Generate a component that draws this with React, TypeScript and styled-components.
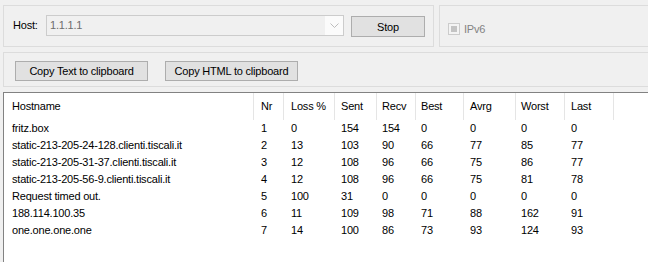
import React from 'react'
import styled, { createGlobalStyle } from 'styled-components'

const GlobalStyle = createGlobalStyle`
  html, body {
    margin: 0;
    width: 648px;
    height: 262px;
    overflow: hidden;
    background: #f0f0f0;
    font-family: "Liberation Sans", Arial, sans-serif;
    font-size: 11px;
    letter-spacing: -0.2px;
    color: #000;
  }
`

const columns = [
  { key: 'host', label: 'Hostname', width: 250, pad: 8 },
  { key: 'nr', label: 'Nr', width: 30, pad: 7 },
  { key: 'loss', label: 'Loss %', width: 51, pad: 7 },
  { key: 'sent', label: 'Sent', width: 42, pad: 6 },
  { key: 'recv', label: 'Recv', width: 39, pad: 5 },
  { key: 'best', label: 'Best', width: 48, pad: 5 },
  { key: 'avrg', label: 'Avrg', width: 52, pad: 6 },
  { key: 'worst', label: 'Worst', width: 49, pad: 5 },
  { key: 'last', label: 'Last', width: 49, pad: 6 },
]

const rows = [
  ['fritz.box', '1', '0', '154', '154', '0', '0', '0', '0'],
  ['static-213-205-24-128.clienti.tiscali.it', '2', '13', '103', '90', '66', '77', '85', '77'],
  ['static-213-205-31-37.clienti.tiscali.it', '3', '12', '108', '96', '66', '75', '86', '77'],
  ['static-213-205-56-9.clienti.tiscali.it', '4', '12', '108', '96', '66', '75', '81', '78'],
  ['Request timed out.', '5', '100', '31', '0', '0', '0', '0', '0'],
  ['188.114.100.35', '6', '11', '109', '98', '71', '88', '162', '91'],
  ['one.one.one.one', '7', '14', '100', '86', '73', '93', '124', '93'],
]

const gridTemplate = columns.map((c) => `${c.width}px`).join(' ') + ' 1fr'

const Window = styled.div`
  box-sizing: border-box;
  display: flex;
  flex-direction: column;
  gap: 5px;
  height: 262px;
  padding: 5px 0 0 3px;
`

const TopRow = styled.div`
  display: flex;
  flex: none;
  gap: 5px;
`

const GroupBox = styled.div<{ $width?: number; $height: number; $open?: boolean }>`
  box-sizing: border-box;
  display: flex;
  flex: ${(p) => (p.$width ? 'none' : '1 0 auto')};
  align-items: flex-start;
  height: ${(p) => p.$height}px;
  ${(p) => (p.$width ? `width: ${p.$width}px;` : '')}
  border: 1px solid #dcdcdc;
  ${(p) => (p.$open ? 'border-right: none;' : '')}
`

const HostBox = styled(GroupBox)`
  padding: 9px 0 0 9px;
`

const OptionBox = styled(GroupBox)`
  padding: 17px 0 0 8px;
`

const CopyBox = styled(GroupBox)`
  flex: none;
  padding: 8px 0 0 11px;
  gap: 17px;
`

const Label = styled.span`
  width: 33px;
  line-height: 21px;
`

const Combo = styled.div`
  box-sizing: border-box;
  display: flex;
  width: 298px;
  height: 21px;
  border: 1px solid #cccccc;
  background: #f0f0f0;
`

const ComboText = styled.span`
  flex: 1;
  padding-left: 3px;
  line-height: 19px;
  color: #6d6d6d;
`

const ComboArrow = styled.span`
  display: flex;
  align-items: center;
  justify-content: center;
  width: 18px;
  background: #fbfbfb;
`

const Button = styled.button<{ $width: number; $height: number }>`
  box-sizing: border-box;
  width: ${(p) => p.$width}px;
  height: ${(p) => p.$height}px;
  margin: 0;
  padding: 0;
  border: 1px solid #adadad;
  background: #e1e1e1;
  font: inherit;
  letter-spacing: inherit;
  color: #000;
`

const StopButton = styled(Button)`
  margin: 1px 0 0 7px;
`

const CheckLabel = styled.label`
  display: flex;
  align-items: center;
  gap: 4px;
  color: #838383;
`

const CheckBox = styled.span`
  box-sizing: border-box;
  display: flex;
  align-items: center;
  justify-content: center;
  width: 12px;
  height: 12px;
  border: 1px solid #cccccc;
  background: #f4f4f4;

  &::after {
    content: '';
    width: 6px;
    height: 6px;
    background: #c4c4c4;
  }
`

const ListView = styled.div`
  flex: 1 1 auto;
  min-height: 0;
  border-top: 1px solid #828282;
  border-left: 1px solid #828282;
  background: #fff;
`

const HeaderRow = styled.div`
  display: grid;
  grid-template-columns: ${gridTemplate};
  height: 27px;
`

const HeaderCell = styled.div<{ $pad: number }>`
  padding-left: ${(p) => p.$pad}px;
  line-height: 27px;
  border-right: 1px solid #e5e5e5;
  white-space: nowrap;
`

const DataRow = styled.div`
  display: grid;
  grid-template-columns: ${gridTemplate};
  height: 17px;
`

const DataCell = styled.div<{ $pad: number }>`
  padding-left: ${(p) => p.$pad}px;
  line-height: 17px;
  white-space: nowrap;
`

const App = () => {
  return (
    <>
      <GlobalStyle />
      <Window>
        <TopRow>
          <HostBox $width={431} $height={42}>
            <Label>Host:</Label>
            <Combo>
              <ComboText>1.1.1.1</ComboText>
              <ComboArrow>
                <svg width="9" height="5" viewBox="0 0 9 5">
                  <path d="M0.5 0.5 L4.5 4.5 L8.5 0.5" fill="none" stroke="#bdbdbd" strokeWidth="1" />
                </svg>
              </ComboArrow>
            </Combo>
            <StopButton $width={74} $height={21}>Stop</StopButton>
          </HostBox>
          <OptionBox $height={42} $open>
            <CheckLabel>
              <CheckBox />
              IPv6
            </CheckLabel>
          </OptionBox>
        </TopRow>
        <CopyBox $height={35} $open>
          <Button $width={133} $height={20}>Copy Text to clipboard</Button>
          <Button $width={133} $height={20}>Copy HTML to clipboard</Button>
        </CopyBox>
        <ListView>
          <HeaderRow>
            {columns.map((c) => (
              <HeaderCell key={c.key} $pad={c.pad}>
                {c.label}
              </HeaderCell>
            ))}
          </HeaderRow>
          {rows.map((r) => (
            <DataRow key={r[1]}>
              {r.map((v, i) => (
                <DataCell key={columns[i].key} $pad={columns[i].pad}>
                  {v}
                </DataCell>
              ))}
            </DataRow>
          ))}
        </ListView>
      </Window>
    </>
  )
}

export default App
